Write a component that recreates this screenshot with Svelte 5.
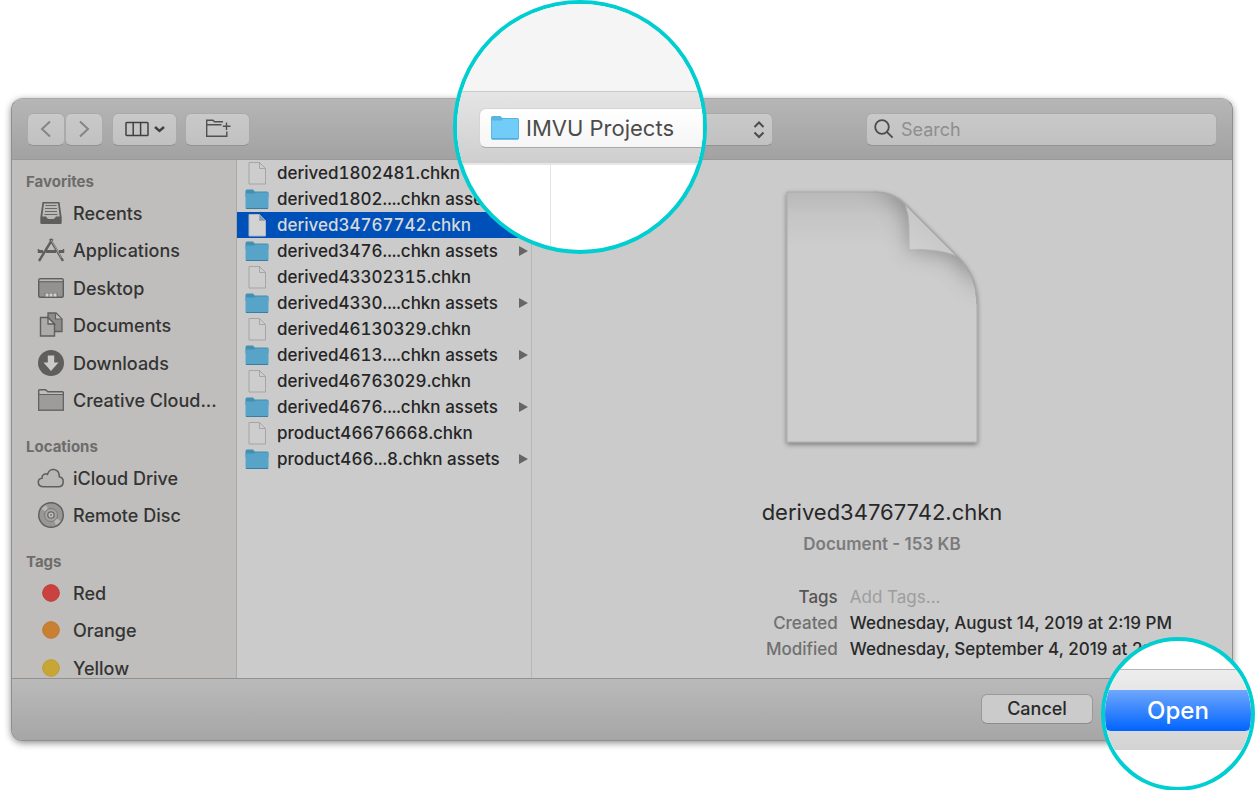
<script>
  const sections = [
    {
      title: 'Favorites',
      items: [
        { name: 'Recents', icon: 'recents' },
        { name: 'Applications', icon: 'apps' },
        { name: 'Desktop', icon: 'desktop' },
        { name: 'Documents', icon: 'documents' },
        { name: 'Downloads', icon: 'downloads' },
        { name: 'Creative Cloud...', icon: 'folder' }
      ]
    },
    {
      title: 'Locations',
      items: [
        { name: 'iCloud Drive', icon: 'cloud' },
        { name: 'Remote Disc', icon: 'disc' }
      ]
    },
    {
      title: 'Tags',
      items: [
        { name: 'Red', icon: 'tag', fill: '#c9423f', edge: '#c03632' },
        { name: 'Orange', icon: 'tag', fill: '#ca8033', edge: '#c37526' },
        { name: 'Yellow', icon: 'tag', fill: '#c8a636', edge: '#c09d28' }
      ]
    }
  ];

  const files = [
    { name: 'derived1802481.chkn' },
    { name: 'derived1802....chkn assets', folder: true },
    { name: 'derived34767742.chkn' },
    { name: 'derived3476....chkn assets', folder: true },
    { name: 'derived43302315.chkn' },
    { name: 'derived4330....chkn assets', folder: true },
    { name: 'derived46130329.chkn' },
    { name: 'derived4613....chkn assets', folder: true },
    { name: 'derived46763029.chkn' },
    { name: 'derived4676....chkn assets', folder: true },
    { name: 'product46676668.chkn' },
    { name: 'product466...8.chkn assets', folder: true }
  ];

  let selected = $state(2);
</script>

<main class="stage">
  <section class="dialog" aria-label="Open file">
    <header class="toolbar">
      <div class="pair">
        <button class="tool nav" aria-label="Back">
          <svg width="12" height="18" viewBox="0 0 12 18"><path d="M10 1.5 2 9l8 7.5" fill="none" stroke="#858585" stroke-width="2" /></svg>
        </button>
        <button class="tool nav" aria-label="Forward">
          <svg width="12" height="18" viewBox="0 0 12 18"><path d="M2 1.5 10 9l-8 7.5" fill="none" stroke="#858585" stroke-width="2" /></svg>
        </button>
      </div>
      <button class="tool view" aria-label="View as columns">
        <svg width="40" height="16" viewBox="0 0 40 16">
          <g fill="none" stroke="#414141" stroke-width="1.5">
            <rect x="1" y="1.5" width="22" height="13" rx=".8" />
            <path d="M8.2 1.5v13M15.6 1.5v13" />
            <path d="m30 6 4.500 4 4.500-4" stroke-width="2.400" />
          </g>
        </svg>
      </button>
      <button class="tool create" aria-label="New folder">
        <svg width="26" height="20" viewBox="0 0 26 20">
          <g fill="none" stroke="#505050" stroke-width="1.400">
            <path d="M18 2.700H9.500L8 1.200H1.700v16H21.800V12.500M1.700 5.700H16.500" />
            <path d="M21.500 3.500v7.500M17.800 7.200H25.500" />
          </g>
        </svg>
      </button>

      <div class="location">
        <select class="popup" aria-label="Location"><option>IMVU Projects</option></select>
        <svg class="steppers" width="12" height="20" viewBox="0 0 12 20"><path d="m1.500 7 4.500-4.500L10.500 7M1.500 12.500 6 17l4.500-4.500" fill="none" stroke="#4c4c4c" stroke-width="2" /></svg>
        <div class="lens lens-location">
          <div class="zoom-top"></div>
          <div class="zoom-bar">
            <label class="zoom-popup">
              <svg width="28" height="25" viewBox="0 0 28 25">
                <path d="M0 2.500Q0 1 1.500 1h8l1.800 2H26.500q1.500 0 1.500 1.500V10H0z" fill="#59b4de" />
                <path d="M0 5.500h11l1-1.500H28V23q0 1.500-1.500 1.500h-25Q0 24.500 0 23z" fill="#71ccf8" />
                <path d="M.5 5v18q0 1 1 1h25q1 0 1-1V4.500" fill="none" stroke="#5ab9e8" />
                <path d="M1 23.800h26" stroke="#4aa3d0" />
              </svg>
              <select aria-label="Magnified location"><option>IMVU Projects</option></select>
            </label>
          </div>
          <div class="zoom-body"></div>
        </div>
      </div>

      <label class="search">
        <svg width="20" height="20" viewBox="0 0 20 20"><g fill="none" stroke="#4b4b4b" stroke-width="1.800"><circle cx="8" cy="8" r="6.800" /><path d="m12.800 12.800 5.800 5.800" /></g></svg>
        <input type="text" placeholder="Search" aria-label="Search" />
      </label>
    </header>

    <div class="content">
      <nav class="sidebar">
        {#each sections as section}
          <section>
            <h2>{section.title}</h2>
            <ul>
              {#each section.items as item}
                <li>
                  <a href={'#' + item.icon}>
                    <svg width="28" height="28" viewBox="0 1 28 28">
                      {#if item.icon === 'recents'}
                        <path d="M5.500 3h17l2.200 15.500v5.200q0 1.300-1.300 1.300H4.600q-1.300 0-1.300-1.300v-5.200z" fill="#5f5e5d" />
                        <path d="M7 4.500h14l1.700 13h-3.700q-1.500 2.500-3 2.500h-4q-1.500 0-3-2.500H5.300z" fill="#bab9b7" />
                        <path d="M8.500 6.500h11M8 9.500h12M8 12.500h12M7.500 15.500h13" stroke="#6a6968" stroke-width="1.200" />
                      {:else if item.icon === 'apps'}
                        <g fill="none" stroke="#5f5e5d">
                          <path d="M13 3 26 25M15.500 3 2 25" stroke-width="2.400" />
                          <path d="M2 15.500h4M9 15.500h10M22 15.500h4" stroke-width="3.200" />
                          <path d="M1.500 13v4M26.500 13v4" stroke-width="1.500" />
                        </g>
                        <path d="M14.200 4 24.500 22" stroke="#bfbebc" stroke-width=".7" />
                      {:else if item.icon === 'desktop'}
                        <rect x="1.700" y="4.700" width="24.600" height="18.600" rx="1.500" fill="#939290" stroke="#5f5e5d" stroke-width="1.400" />
                        <path d="M2.500 6.200h23" stroke="#c4c3c1" stroke-width="1.200" /><path d="M2 7.800h24" stroke="#646362" />
                        <path d="M7.500 19h13v4h-13z" fill="#747371" />
                        <path d="M8.500 19.500h3v3h-3zM12.500 19.500h3v3h-3zM16.500 19.500h3v3h-3z" fill="#d4d3d1" />
                      {:else if item.icon === 'documents'}
                        <path d="M11 2h8l6 6v12.500H11z" fill="#8d8c8a" stroke="#5f5e5d" stroke-width="1.300" />
                        <path d="M18.500 2.500V8h6" fill="#c5c4c2" stroke="#5f5e5d" stroke-width="1.200" />
                        <path d="M3.500 6.500H11l6.500 6.500v12h-14z" fill="#acaba9" stroke="#5f5e5d" stroke-width="1.400" />
                        <path d="M11 6.500V13h6.500z" fill="#c7c6c4" stroke="#5f5e5d" stroke-width="1.300" />
                      {:else if item.icon === 'downloads'}
                        <circle cx="14" cy="14" r="13" fill="#5f5e5d" />
                        <path d="M10.800 6.500h6.400v7h4.300L14 22l-7.500-8.500h4.300z" fill="#cbcac8" />
                      {:else if item.icon === 'folder'}
                        <path d="M1.700 24V4.500q0-.8.800-.8H8q.8 0 1.500.8l1.300 1.200h14.700q.8 0 .8.800V24z" fill="#bfbebc" stroke="#5f5e5d" stroke-width="1.400" />
                        <path d="M1.700 8.500h24.600V24H1.700z" fill="#9d9c9a" stroke="#646362" stroke-width="1.200" />
                      {:else if item.icon === 'cloud'}
                        <path d="M6.500 22.700C-.5 22.700 0 14 5 14.200 4.700 10.500 8.500 9 10.500 10.300c2-7.500 12-6 11.800 2.500 5.500 1 5.200 9.900-.8 9.900z" fill="#b8b7b5" stroke="#5f5e5d" stroke-width="1.500" />
                      {:else if item.icon === 'disc'}
                        <circle cx="14" cy="14" r="12.300" fill="#989795" stroke="#5f5e5d" stroke-width="1.400" />
                        <path d="M14 14 4.500 8A11.300 11.300 0 0 1 9 4zM14 14l9.500 6a11.300 11.300 0 0 1-4.500 4z" fill="#b9b8b6" />
                        <circle cx="14" cy="14" r="6.500" fill="#a5a4a2" stroke="#7a7978" />
                        <circle cx="14" cy="14" r="3.200" fill="#c2c1bf" stroke="#6a6968" stroke-width="1.300" />
                        <circle cx="14" cy="14" r="1.200" fill="#8b8a88" />
                      {:else}
                        <circle cx="14" cy="14" r="8.300" fill={item.fill} stroke={item.edge} />
                      {/if}
                    </svg>
                    <span>{item.name}</span>
                  </a>
                </li>
              {/each}
            </ul>
          </section>
        {/each}
      </nav>

      <ul class="files">
        {#each files as file, i}
          <li>
            <button class="file" class:selected={i === selected} onclick={() => (selected = i)}>
              <svg width="24" height="24" viewBox="0 0 24 24">
                {#if file.folder}
                  <path d="M.5 4q0-1.500 1.500-1.500h6L9.700 4.500H22q1.500 0 1.500 1.500v4H.5z" fill="#438fb1" />
                  <path d="M.5 6.500h9l1-1H23.500V20.500q0 1.500-1.500 1.500H2Q.5 22 .5 20.500z" fill="#58a4c9" />
                  <path d="M1 21.500h22" stroke="#397e9e" />
                {:else}
                  <path d="M4 1.500h10.500L20.500 7.500v15.500H4z" fill={i === selected ? '#d2d2d2' : '#cdcdcd'} stroke={i === selected ? '#aeb7c5' : '#a5a5a5'} stroke-width="1" />
                  <path d="M14.500 1.500V7.500H20.500" fill={i === selected ? '#7f9cc8' : 'none'} stroke="#a5a5a5" />
                {/if}
              </svg>
              <span>{file.name}</span>
              {#if file.folder}
                <svg class="more" width="10" height="12" viewBox="0 0 10 12"><path d="M1 1 10 6l-9 5z" fill="#666" /></svg>
              {/if}
            </button>
          </li>
        {/each}
      </ul>

      <article class="preview">
        <svg class="sheet" width="210" height="270" viewBox="0 0 210 270">
          <defs>
            <linearGradient id="top" x1="0" y1="0" x2="0" y2="1"><stop offset="0" stop-color="#b8b8b8" /><stop offset=".09" stop-color="#c5c5c5" /><stop offset=".22" stop-color="#cdcdcd" /></linearGradient>
            <linearGradient id="flap" x1="0" y1="1" x2=".6" y2=".3"><stop offset="0" stop-color="#d2d2d2" /><stop offset="1" stop-color="#c5c5c5" /></linearGradient>
            <filter id="drop" x="-10%" y="-10%" width="120%" height="120%"><feDropShadow dx="0" dy="2" stdDeviation="2.500" flood-opacity=".42" /></filter>
            <filter id="soft" x="-50%" y="-50%" width="200%" height="200%"><feGaussianBlur stdDeviation="11" /></filter>
            <clipPath id="page"><path d="M10 10H97Q117 10 129 23L179 73Q200 92 200 122V260H10z" /></clipPath>
          </defs>
          <path d="M10 10H97Q117 10 129 23L179 73Q200 92 200 122V260H10z" fill="url(#top)" stroke="#aaa" filter="url(#drop)" />
          <g clip-path="url(#page)">
            <path d="M96 4Q126 15 132 42V68Q164 66 181 80L205 108V70L140 0z" fill="#747474" opacity=".75" filter="url(#soft)" />
          </g>
          <path d="M128 22Q132 32 132 44V68Q160 66 180 74z" fill="url(#flap)" stroke="#b4b4b4" />
          <path d="M97 10Q117 10 129 23L179 73Q200 92 200 122" fill="none" stroke="#a8a8a8" stroke-width="1.500" />
        </svg>
        <h1>derived34767742.chkn</h1>
        <p>Document - 153 KB</p>
        <dl>
          <dt class="strong">Tags</dt><dd class="empty">Add Tags...</dd>
          <dt>Created</dt><dd>Wednesday, August 14, 2019 at 2:19 PM</dd>
          <dt>Modified</dt><dd>Wednesday, September 4, 2019 at 2:19 PM</dd>
        </dl>
      </article>
    </div>

    <footer>
      <button class="cancel">Cancel</button>
    </footer>
  </section>

  <div class="lens lens-open">
    <div class="open-top"></div>
    <div class="open-bar"><button>Open</button></div>
  </div>
</main>

<style>
  :global(body) { background: #fff; }
  * { box-sizing: border-box; }
  h1, h2, p, ul, dl, dd { margin: 0; padding: 0; }
  ul { list-style: none; }
  svg { display: block; flex: none; }
  button, input, select { font: inherit; color: inherit; border: 0; margin: 0; padding: 0; }

  .stage {
    position: relative;
    padding: 98px 22px 50px 11px;
    font-family: Inter, sans-serif;
    font-size: 18px;
    line-height: 26px;
    color: #343434;
  }
  .dialog {
    display: flex;
    flex-direction: column;
    border: 1px solid #8f8f8f;
    border-top-color: #aaa;
    border-radius: 12px;
    background: #cbcbcb;
    box-shadow: 0 2px 7px rgba(0, 0, 0, 0.45);
  }

  .toolbar {
    display: flex;
    align-items: center;
    height: 61px;
    padding: 0 15px;
    border-radius: 11px 11px 0 0;
    border-bottom: 1px solid #989898;
    background: linear-gradient(#b6b6b6, #a2a2a2);
  }
  .tool, .popup, .search {
    height: 33px;
    border: 1px solid #aaa;
    border-bottom-color: #929292;
    border-radius: 6px;
    background: linear-gradient(#c9c9c9, #c1c1c1);
  }
  .tool { display: flex; align-items: center; justify-content: center; }
  .pair { display: flex; }
  .nav { width: 38px; }
  .view { width: 65px; margin-left: 9px; }
  .create { width: 65px; margin-left: 8px; }
  .location { position: relative; width: 302px; margin: 0 93px 0 auto; }
  .popup { display: block; width: 100%; padding-left: 40px; appearance: none; }
  .steppers { position: absolute; right: 8px; top: 7px; }
  .search { display: flex; align-items: center; gap: 7px; width: 351px; padding: 0 7px; }
  .search input { flex: 1; min-width: 0; height: 100%; background: none; outline: 0; }
  .search input::placeholder { color: #8e8e8e; opacity: 1; }

  .content { display: flex; height: 518px; }
  .sidebar {
    flex: none;
    width: 225px;
    padding-top: 8px;
    overflow: hidden;
    background: #bfbebc;
    border-right: 1px solid #aaa;
    font-weight: 500;
  }
  .sidebar section { margin-bottom: 13px; }
  h2 { padding-left: 14px; font-size: 15px; line-height: 27px; font-weight: 700; color: #6d6c6b; }
  .sidebar li:nth-child(odd) { height: 37px; }
  .sidebar li:nth-child(even) { height: 38px; }
  .sidebar a { display: flex; align-items: center; gap: 8px; height: 100%; padding-left: 25px; color: inherit; text-decoration: none; }

  .files { flex: none; width: 295px; border-right: 1px solid #b7b7b7; font-size: 17px; font-weight: 500; font-variant-numeric: tabular-nums; }
  .file { display: flex; align-items: center; gap: 8px; width: 100%; height: 26px; padding: 0 3px 0 8px; background: none; text-align: left; white-space: nowrap; color: #262626; }
  .file.selected { background: #0050b9; color: #d8d8d8; }
  .more { margin-left: auto; }

  .preview { flex: 1; min-width: 0; display: flex; flex-direction: column; align-items: center; padding-top: 22px; }
  h1 { margin-top: 45px; font-size: 22px; line-height: 30px; font-weight: 400; color: #282828; }
  .preview p { margin-top: 4px; font-size: 17px; font-weight: 600; color: #7b7b7b; }
  dl { display: grid; grid-template-columns: 4fr 5fr; column-gap: 12px; width: 100%; margin-top: 27px; font-size: 17px; white-space: nowrap; }
  dt { text-align: right; font-weight: 500; color: #707070; }
  .strong { color: #555; }
  dd { font-weight: 500; color: #292929; }
  .empty { font-weight: 400; color: #9d9d9d; }

  footer {
    display: flex;
    justify-content: flex-end;
    height: 62px;
    padding: 15px 139px 0 16px;
    border-top: 1px solid #919191;
    border-radius: 0 0 11px 11px;
    background: linear-gradient(#bababa, #a6a6a6);
  }
  .cancel { width: 112px; height: 30px; border: 1px solid #999; border-bottom-color: #8b8b8b; border-radius: 6px; background: #cbcbcb; color: #292929; font-weight: 500; }

  .lens { position: absolute; overflow: hidden; border: 4px solid #00ced1; border-radius: 50%; background: #fff; }
  .lens-location { left: -18px; top: -113px; width: 254px; height: 254px; }
  .zoom-top { height: 87px; background: #f5f5f5; }
  .zoom-bar { height: 74px; padding: 16px 0 0 22px; border-top: 1px solid #c9c9c9; border-bottom: 2px solid #e6e6e6; background: linear-gradient(#e5e5e5, #cecece); }
  .zoom-popup { display: flex; align-items: center; gap: 7px; width: 260px; height: 40px; padding-left: 11px; border: 1px solid #d4d4d4; border-bottom-color: #aaa; border-radius: 7px; background: linear-gradient(#fff, #f5f5f5); }
  .zoom-popup select { appearance: none; background: none; font-size: 22px; color: #4c4c4c; }
  .zoom-body { height: 85px; width: 94px; border-right: 1px solid #e3e3e3; }
  .lens-open { right: 0; bottom: 0; width: 154px; height: 154px; }
  .open-top { height: 29px; border-bottom: 1px solid #b5b5b5; }
  .open-bar { height: 80px; padding-top: 20px; background: linear-gradient(#ededed, #d3d3d3); }
  .open-bar button { width: 100%; height: 41px; border-radius: 0 0 6px 6px; background: linear-gradient(#6fa7fc, #0064ff); color: #fff; font-size: 24px; font-weight: 500; }
</style>
